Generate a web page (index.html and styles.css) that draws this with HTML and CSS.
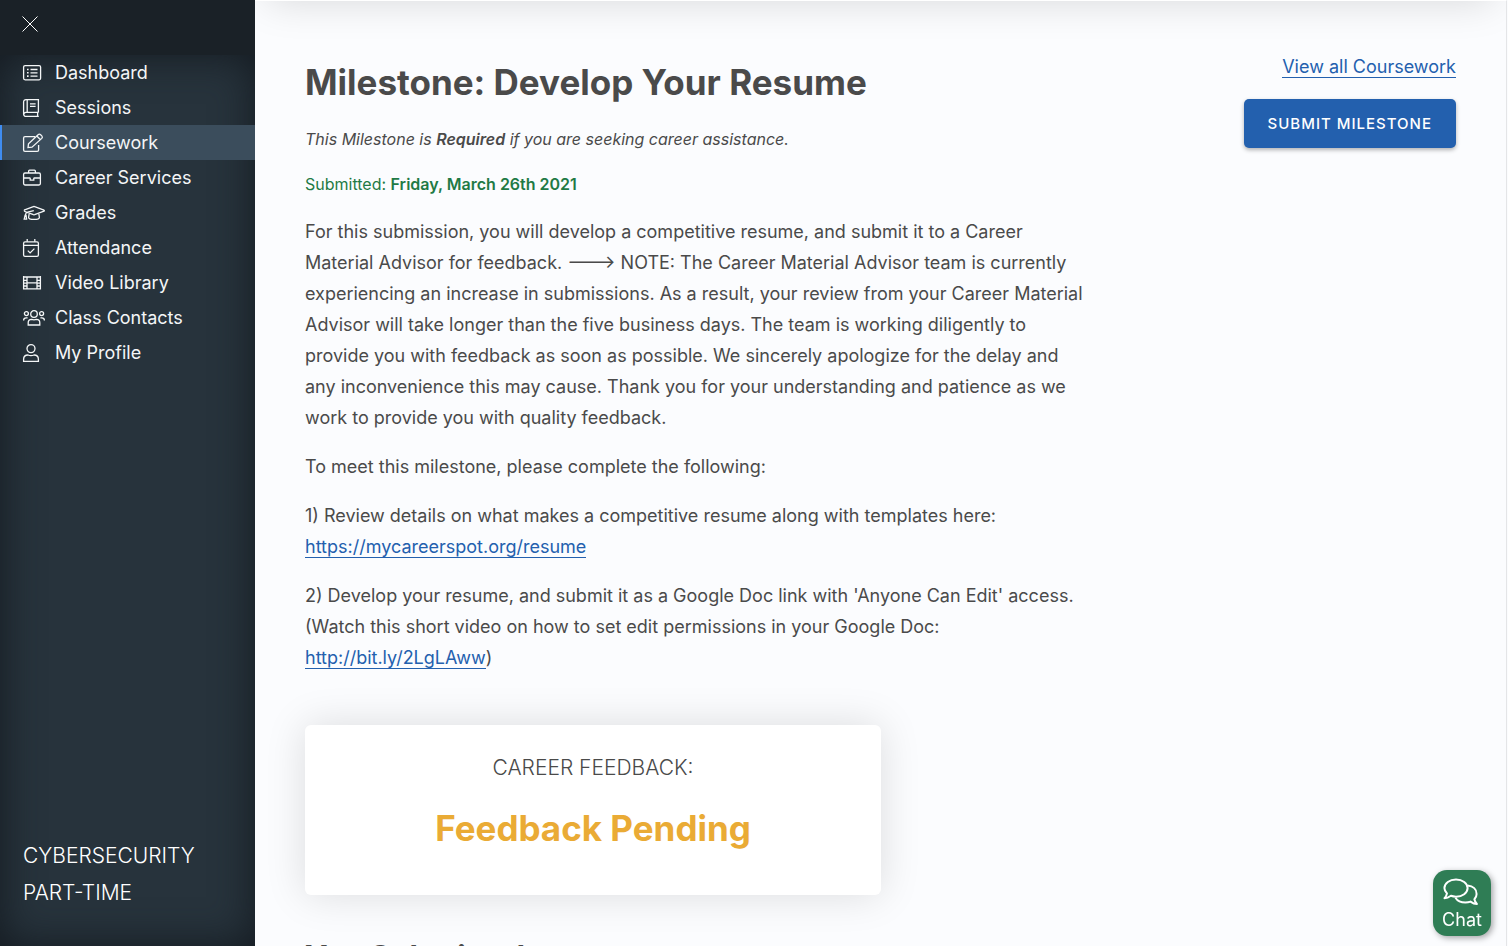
FILE: index.html
```html
<!DOCTYPE html>
<html lang="en">
<head>
<meta charset="utf-8">
<title>Milestone: Develop Your Resume</title>
<link rel="stylesheet" href="styles.css">
</head>
<body>
<div class="app">
  <aside class="sidebar">
    <div class="sidebar-top">
      <button class="close" type="button" aria-label="Close menu">
        <svg width="16" height="16" viewBox="0 0 16 16"><path d="M.5 .5l15 15M15.500 .5L.5 15.500"/></svg>
      </button>
    </div>
    <div class="sidebar-body">
      <nav class="nav">
        <a class="nav-link" href="#"><svg class="icon" viewBox="0 0 22 18"><rect x=".6" y="1.600" width="17" height="14.200" rx="1.500"/><path d="M7.500 5.500h7M7.500 8.800h7M7.500 12.100h7"/><path stroke-width="1.600" d="M4 5.500h1.600M4 8.800h1.600M4 12.100h1.600"/></svg>Dashboard</a>
        <a class="nav-link" href="#"><svg class="icon" viewBox="0 0 22 18"><path d="M15.400 13.400V.6H3A2.400 2.400 0 0 0 .6 3v12A2.400 2.400 0 0 0 3 17.400h12.800M15.400 13.400H3a2 2 0 0 0-2.200 2M14.600 13.600v3.600M4.200.8v12.400M7 4.800h5.600M7 7.400h5.600"/></svg>Sessions</a>
        <a class="nav-link active" href="#" aria-current="page"><svg class="icon" viewBox="0 0 22 18"><path d="M12 2.600H2A1.400 1.400 0 0 0 .6 4v12A1.400 1.400 0 0 0 2 17.400h12.200a1.400 1.400 0 0 0 1.400-1.400v-5M5 13.600l.5-3.700 9.600-9.200a1.800 1.800 0 0 1 2.500 0l1.200 1.200a1.800 1.800 0 0 1 0 2.500l-9.800 8.800zM13.800 2l3.700 3.700"/></svg>Coursework</a>
        <a class="nav-link" href="#"><svg class="icon" viewBox="0 0 22 18"><rect x=".6" y="4" width="16.800" height="12" rx="1.400"/><path d="M5.600 4V2.200q0-1 1-1h4.800q1 0 1 1V4M.6 9h6.600M10.800 9h6.600M7.200 8.800v2.400h3.600V8.800"/></svg>Career Services</a>
        <a class="nav-link" href="#"><svg class="icon" viewBox="0 0 22 18"><path d="M1 6.200l9.400-3.600q.6-.2 1.200 0L21 6.200q.8.5 0 1l-9.400 3.500q-.6.2-1.200 0L4.300 8.400M10.800 6.600L4.600 8.100Q2.600 8.700 2.400 11M1 6.400q0 .8 3 1.900M2.200 10.800L1.200 15.200h2.400L3 10.800M6.200 9.300l-.6 4.200q0 1.900 5.400 1.900t5.400-1.900l-.6-4.200"/></svg>Grades</a>
        <a class="nav-link" href="#"><svg class="icon" viewBox="0 0 22 18"><rect x=".6" y="2.800" width="14.800" height="14.600" rx="1.400"/><path d="M.6 6.400h14.800M4.200 0v2.800M11.800 0v2.800M4.800 11.600l2.300 2.300 4.300-4.300"/></svg>Attendance</a>
        <a class="nav-link" href="#"><svg class="icon" viewBox="0 0 22 18"><path d="M.6 2v13.400M4 2.400v12.800M14 2.400v12.800M17.400 2v13.400M.6 3h16.800M.6 6.400H4M.6 9.200H4M.6 12H4M.6 14.800h16.800M14 6.400h3.400M14 9.200h3.400M14 12h3.400M4 8.800h10"/></svg>Video Library</a>
        <a class="nav-link" href="#"><svg class="icon" viewBox="0 0 22 18"><circle cx="11" cy="5" r="3.300"/><circle cx="3.400" cy="4.600" r="2"/><circle cx="18.600" cy="4.600" r="2"/><path d="M5.200 16v-2.200q0-3.400 3.400-3.400 2.400.8 4.800 0 3.400 0 3.400 3.400V16zM.6 11.400q0-2.600 2.600-2.600h1.400M21.400 11.400q0-2.600-2.600-2.600h-1.400"/></svg>Class Contacts</a>
        <a class="nav-link" href="#"><svg class="icon" viewBox="0 0 22 18"><circle cx="8" cy="4.600" r="4"/><path d="M.6 17.400v-2q0-4.400 4.400-4.400 3 1.200 6 0 4.400 0 4.400 4.400v2z"/></svg>My Profile</a>
      </nav>
      <p class="cohort">CYBERSECURITY PART-TIME</p>
    </div>
  </aside>
  <main class="main">
    <article class="content">
      <h1 class="title">Milestone: Develop Your Resume</h1>
      <p class="note">This Milestone is <strong>Required</strong> if you are seeking career assistance.</p>
      <p class="submitted">Submitted: <strong>Friday, March 26th 2021</strong></p>
      <div class="copy">
        <p>For this submission, you will develop a competitive resume, and submit it to a Career Material Advisor for feedback. ---&gt; NOTE: The Career Material Advisor team is currently experiencing an increase in submissions. As a result, your review from your Career Material Advisor will take longer than the five business days. The team is working diligently to provide you with feedback as soon as possible. We sincerely apologize for the delay and any inconvenience this may cause. Thank you for your understanding and patience as we work to provide you with quality feedback.</p>
        <p>To meet this milestone, please complete the following:</p>
        <p>1) Review details on what makes a competitive resume along with templates here: <a class="link" href="#">https://mycareerspot.org/resume</a></p>
        <p>2) Develop your resume, and submit it as a Google Doc link with 'Anyone Can Edit' access. (Watch this short video on how to set edit permissions in your Google Doc: <a class="link" href="#">http://bit.ly/2LgLAww</a>)</p>
      </div>
      <section class="card">
        <h2 class="card-label">CAREER FEEDBACK:</h2>
        <p class="card-status">Feedback Pending</p>
      </section>
      <h2 class="subtitle">You Submitted:</h2>
    </article>
    <div class="actions">
      <a class="link" href="#">View all Coursework</a>
      <button class="submit" type="button">SUBMIT MILESTONE</button>
    </div>
  </main>
</div>
<button class="chat" type="button">
  <svg width="36" height="28" viewBox="0 0 36 28"><path d="M12 1.500c6.400 0 11.600 3.800 11.600 8.600s-5.200 8.600-11.600 8.600c-1.800 0-3.600-.3-5.100-.9C5 19.200 2.800 20.200 .5 20.200c1.300-1.400 2.200-3.200 2.500-4.800C1.400 13.900 .4 12.100 .4 10.100 .4 5.300 5.600 1.500 12 1.500z"/><path d="M23.600 7.600c5.600.5 9 4 9 8.300 0 2-.8 3.800-2.200 5.300.3 1.600 1.200 3.400 2.500 4.800-2.300 0-4.500-1-6.400-2.400-1.500.6-3.300.9-5.100.9-4.600 0-8.100-1.900-10-4.800"/></svg>
  <span>Chat</span>
</button>
</body>
</html>
```
FILE: styles.css
```css
* { box-sizing: border-box; }
body {
  margin: 0;
  font-family: Inter, "Liberation Sans", sans-serif;
  font-size: 18px;
  color: #4a4a4a;
  background: #fbfcfe;
}
p, h1, h2 { margin: 0; }
button { font: inherit; border: 0; cursor: pointer; }
svg { fill: none; stroke: currentColor; overflow: visible; }

.app { display: flex; height: 100vh; overflow: hidden; }

.sidebar {
  width: 255px;
  flex: none;
  display: flex;
  flex-direction: column;
  background: #27333c;
  color: #fff;
}
.sidebar-top { height: 55px; padding: 14px 20px; background: #1a2127; }
.close { display: flex; padding: 2px; background: none; color: #fff; }
.sidebar-body {
  flex: 1;
  display: flex;
  flex-direction: column;
  justify-content: space-between;
  box-shadow: inset 0 0 40px #141a20;
}
.nav { display: flex; flex-direction: column; }
.nav-link {
  display: flex;
  align-items: center;
  gap: 10px;
  height: 35px;
  padding-left: 21px;
  border-left: 2px solid transparent;
  color: #f4f6f7;
  text-decoration: none;
}
.nav-link.active { background: #3b4d5c; border-left-color: #3f8cf0; }
.icon { width: 22px; height: 18px; flex: none; stroke-width: 1.3; }
.cohort { padding: 0 40px 35px 23px; font-size: 21px; font-weight: 300; line-height: 37px; }

.main {
  position: relative;
  flex: 1;
  display: flex;
  justify-content: space-between;
  margin-right: 1px;
  padding: 56px 50px 0;
  border-right: 1px solid #e4e5e7;
  border-top: 1px solid #fff;
  overflow: hidden;
}
.main::before {
  content: "";
  position: absolute;
  top: -60px;
  left: 12px;
  right: 12px;
  height: 60px;
  box-shadow: 0 0 40px rgba(0, 0, 0, .15);
}
.content { width: 778px; }
.title { font-size: 35px; font-weight: 700; line-height: 50px; }
.subtitle { font-size: 31px; font-weight: 700; line-height: 50px; }
.note { margin-top: 20px; font-size: 16px; line-height: 24px; font-style: italic; }
.note strong, .submitted strong { font-weight: 600; }
.submitted { margin-top: 21px; font-size: 16px; line-height: 24px; color: #1f7a45; }
.copy { display: flex; flex-direction: column; gap: 18px; margin-top: 20px; line-height: 31px; }
.link { color: #2360ae; text-decoration: none; border-bottom: 1px solid #2360ae; }
.card {
  width: 576px;
  height: 170px;
  margin: 52px 0 37px;
  padding: 24px;
  background: #fff;
  border-radius: 6px;
  text-align: center;
  box-shadow: 0 0 40px rgba(0, 0, 0, .13);
}
.card-label { font-size: 21px; font-weight: 300; line-height: 37px; }
.card-status { margin-top: 17px; font-size: 35px; font-weight: 700; line-height: 50px; color: #eaab35; }
.actions { display: flex; flex-direction: column; align-items: flex-end; gap: 21px; line-height: 20px; }
.submit {
  height: 49px;
  padding: 0 24px;
  border-radius: 5px;
  background: #2360ae;
  color: #fff;
  font-size: 15px;
  font-weight: 500;
  letter-spacing: 1px;
  box-shadow: 0 2px 4px rgba(0, 0, 0, .3);
}
.chat {
  position: fixed;
  right: 17px;
  bottom: 10px;
  display: flex;
  flex-direction: column;
  align-items: center;
  gap: 3px;
  width: 58px;
  height: 66px;
  padding: 8px 0 0;
  border-radius: 14px;
  background: #2f7d55;
  color: #fff;
  box-shadow: 2px 2px 6px rgba(0, 0, 0, .35);
}
.chat svg { stroke-width: 2; stroke-linejoin: round; }
```
